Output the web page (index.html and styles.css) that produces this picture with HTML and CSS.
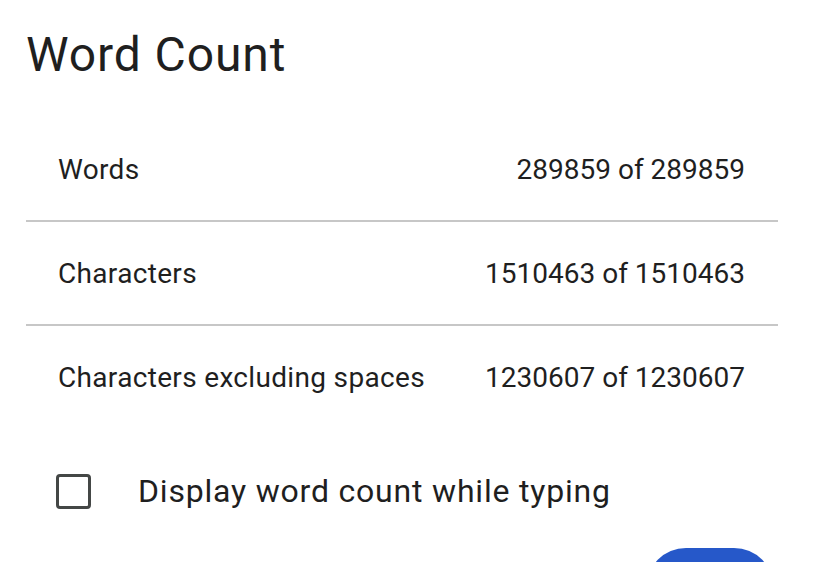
FILE: index.html
```html
<!DOCTYPE html>
<html>
<head>
<meta charset="utf-8">
<link rel="stylesheet" href="styles.css">
</head>
<body>
<div class="dialog">
  <h1 class="title">Word Count</h1>
  <div class="stats">
    <div class="row"><span class="label">Words</span><span class="value">289859 of 289859</span></div>
    <div class="row"><span class="label">Characters</span><span class="value">1510463 of 1510463</span></div>
    <div class="row"><span class="label">Characters excluding spaces</span><span class="value">1230607 of 1230607</span></div>
  </div>
  <label class="check">
    <span class="box"></span>
    <span class="check-label">Display word count while typing</span>
  </label>
  <div class="actions">
    <button class="ok">OK</button>
  </div>
</div>
</body>
</html>
```
FILE: styles.css
```css
html, body {
  margin: 0;
  padding: 0;
  background: #ffffff;
  overflow: hidden;
}
body {
  font-family: Roboto, "Open Sans", sans-serif;
  color: #1f1f1f;
}
.dialog {
  width: 752px;
  padding: 0 0 0 26px;
}
.title {
  margin: 0;
  padding-top: 27px;
  font-size: 48px;
  font-weight: 400;
  line-height: 56px;
  height: 91px;
  letter-spacing: 0.9px;
  color: #1f1f1f;
}
.stats {
  display: flex;
  flex-direction: column;
}
.row {
  display: flex;
  justify-content: space-between;
  align-items: center;
  height: 102px;
  padding: 0 33px 0 32px;
  font-size: 28px;
  border-bottom: 2px solid #c7c7c7;
}
.label {
  letter-spacing: 0.33px;
}
.row:last-child {
  border-bottom: none;
}
.check {
  display: flex;
  align-items: center;
  height: 60px;
  margin-top: 33px;
  padding-left: 30px;
}
.box {
  width: 29px;
  height: 29px;
  border: 3px solid #444746;
  border-radius: 4px;
  flex: none;
}
.check-label {
  margin-left: 47px;
  font-size: 32px;
  letter-spacing: 0.8px;
}
.actions {
  display: flex;
  justify-content: flex-end;
  padding-top: 27px;
  padding-right: 4px;
}
.ok {
  width: 128px;
  height: 80px;
  border: none;
  border-radius: 40px;
  background: #2658c9;
  color: #ffffff;
  font-family: inherit;
  font-size: 28px;
}
```
